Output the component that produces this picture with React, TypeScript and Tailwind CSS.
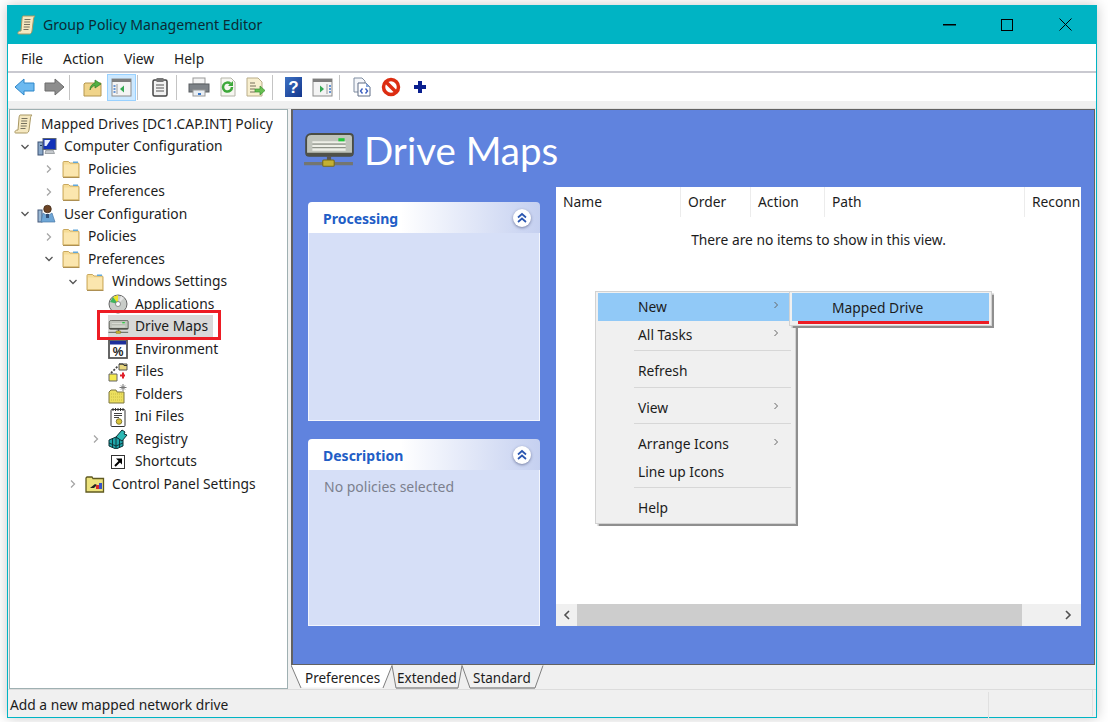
import type { ReactNode } from 'react';

const FONT = "font-['Noto_Sans','Liberation_Sans',sans-serif]";

function Svg({ s = 20, v = 20, children }: { s?: number; v?: number; children: ReactNode }) {
    return (
        <svg width={s} height={s} viewBox={`0 0 ${v} ${v}`} className="block shrink-0">
            {children}
        </svg>
    );
}

function Scroll({ s = 20 }: { s?: number }) {
    return (
        <Svg s={s}>
            <path d="M6 1h12c-1 1-1.500 2-1.500 3L15 16c-.2 1.500-1 3-2.500 3H2c-1 0-1.500-.5-1-1.500.5-1 1-1.500 3-1.500L5 4c.1-1 .4-3 1-3z" fill="#f5e8c0" stroke="#a89763" strokeWidth="1" />
            <path d="M7.500 4.500h6M7.200 7h6M7 9.500h6M6.700 12h6M6.500 14.500h5" stroke="#77725e" strokeWidth="1" />
        </Svg>
    );
}

function Folder() {
    return (
        <Svg s={20}>
            <path d="M2 18V3.500c0-.6.4-1 1-1h4.500L9 4h8c.6 0 1 .4 1 1v13z" fill="#f6dc96" stroke="#c9a85e" strokeWidth="1" />
            <path d="M3 5.500h14v11.500H3z" fill="#fbe6ae" />
            <rect x="12" y="2.500" width="5" height="1.500" fill="#62a8da" />
            <path d="M2 18.500h16.500" stroke="#ad8f52" strokeWidth="1" />
        </Svg>
    );
}

function Computer() {
    return (
        <Svg s={20}>
            <rect x="1" y="5" width="5" height="13" fill="#8aa8c8" stroke="#3c5274" strokeWidth="1" />
            <rect x="3" y="8" width="2" height="1" fill="#20395e" />
            <rect x="6" y="1.500" width="13" height="11" fill="#1131b8" stroke="#5c6672" strokeWidth="1" />
            <path d="M7.500 3h6l-4 6H7.500z" fill="#e8f0ff" />
            <path d="M9 13h7l1.500 3.500H8z" fill="#c4c8cc" stroke="#83888d" strokeWidth=".7" />
        </Svg>
    );
}

function User() {
    return (
        <Svg s={20}>
            <rect x="1" y="6" width="4" height="12" fill="#9ab8d4" stroke="#44597a" strokeWidth="1" />
            <circle cx="10.500" cy="5" r="3.800" fill="#6d4526" stroke="#3a2412" strokeWidth=".7" />
            <path d="M6 9l4.500 3 4.500-3 3 9H4z" fill="#6ea6d6" stroke="#4a78a8" strokeWidth=".7" />
            <path d="M9 10h3v4H9z" fill="#2f4f78" />
        </Svg>
    );
}

function DiscIcon() {
    return (
        <Svg s={20}>
            <circle cx="10" cy="10" r="9" fill="#c8ccc8" stroke="#666" strokeWidth="1" />
            <path d="M10 10L5 3l5-2z" fill="#eee322" />
            <path d="M10 10L2 8l3-5z" fill="#3fb45e" />
            <path d="M10 10l3-8 3 2z" fill="#e6e6e6" />
            <circle cx="10" cy="10" r="2.500" fill="#fff" stroke="#666" strokeWidth=".7" />
        </Svg>
    );
}

function DriveIcon({ s = 21 }: { s?: number }) {
    return (
        <svg width={s} height={s * 0.66} viewBox="0 0 50 33" className="block shrink-0">
            <path d="M3 6c0-3 2-5 5-5h37c2 0 3 1 3 3v15c0 2-1 3-3 3H6c-2 0-3-1-3-3z" fill="#bfc3ba" stroke="#4a4d44" strokeWidth="1.800" />
            <path d="M9 9h32M9 12.500h32M9 16h32" stroke="#eef0e8" strokeWidth="2" />
            <path d="M9 10.500h32M9 14h32" stroke="#8e9288" strokeWidth="1" />
            <rect x="34" y="5" width="6" height="3" fill="#22c83a" />
            <rect x="3" y="19" width="45" height="3" fill="#50524a" />
            <rect x="23" y="22" width="4" height="4" fill="#555" />
            <path d="M1 29.500h47" stroke="#74766f" strokeWidth="3" />
            <rect x="19" y="26" width="11" height="6" rx="1" fill="#c4b032" stroke="#75691c" strokeWidth="1" />
        </svg>
    );
}

function EnvIcon() {
    return (
        <Svg s={20}>
            <rect x="1" y="1" width="18" height="18" fill="#fff" stroke="#555" strokeWidth="1.800" />
            <rect x="2" y="2" width="16" height="3.500" fill="#1c2f9c" />
            <text x="10" y="16.500" textAnchor="middle" fontSize="12" fontWeight="700" fill="#222" fontFamily="Liberation Sans, sans-serif">%</text>
        </Svg>
    );
}

function FilesIcon() {
    return (
        <Svg s={20}>
            <path d="M11 2h8v6h-8z" fill="#e8d67e" stroke="#555" strokeWidth="1" />
            <path d="M11 2h4l1 1.500h3" fill="none" stroke="#333" strokeWidth="1" />
            <path d="M1 12h8v7H1z" fill="#f4e94e" stroke="#666" strokeWidth="1" />
            <path d="M3 11L10 4" stroke="#444" strokeWidth="1.800" strokeDasharray="2 1.500" />
            <path d="M12 13.500h5M15 10.500v6" stroke="#e0202a" strokeWidth="2" />
        </Svg>
    );
}

function FoldersIcon() {
    return (
        <Svg s={20}>
            <path d="M1 19V8l2-2h5l1 2h7v11z" fill="#ecdf5e" stroke="#7c7640" strokeWidth="1" />
            <path d="M3 10h12M3 13h12M3 16h12" stroke="#c9bc44" strokeWidth="1" strokeDasharray="1 1" />
            <path d="M15 0v7M11.500 3.500h7M13 1.500l4 4M17 1.500l-4 4" stroke="#777" strokeWidth="1" />
        </Svg>
    );
}

function IniIcon() {
    return (
        <Svg s={20}>
            <rect x="3" y="2.500" width="14" height="17" rx="1" fill="#fff" stroke="#333" strokeWidth="1" />
            <path d="M5 1v3M7.500 1v3M10 1v3M12.500 1v3M15 1v3" stroke="#333" strokeWidth="1" />
            <path d="M6 6.500h8M6 8.500h8M6 10.500h5" stroke="#444" strokeWidth="1" />
            <circle cx="11" cy="14.500" r="2.800" fill="#d8c33a" stroke="#6d6420" strokeWidth=".8" />
        </Svg>
    );
}

function RegistryIcon() {
    return (
        <Svg s={20}>
            <path d="M1 11l7-3 7 3v6l-7 3-7-3z" fill="#1fa5aa" stroke="#0c2f33" strokeWidth="1" />
            <path d="M1 14l7 3 7-3M8 8v12M4.500 9.500v9M11.500 9.500v9" stroke="#0c2f33" strokeWidth=".9" fill="none" />
            <path d="M8 8l6-7 3 2-1 2 3 1-5 6z" fill="#2cb8b4" stroke="#0c2f33" strokeWidth="1" />
        </Svg>
    );
}

function ShortcutIcon() {
    return (
        <Svg s={20}>
            <rect x="3.500" y="3.500" width="13" height="13" fill="#fff" stroke="#333" strokeWidth="1" />
            <path d="M7 14l5-5" stroke="#000" strokeWidth="2" />
            <path d="M8 6.500h6v6z" fill="#000" />
        </Svg>
    );
}

function PanelFolder() {
    return (
        <Svg s={20}>
            <path d="M1 18V4l1-1h5l1 1.500h10.500V18z" fill="#ece27c" stroke="#5f5a20" strokeWidth="1.300" />
            <path d="M5 14l5-4 2 1-3 3z" fill="#222" />
            <rect x="11" y="11" width="3" height="4" fill="#d8282a" />
            <rect x="14" y="9" width="3" height="6" fill="#3854c8" />
        </Svg>
    );
}

function Chevron({ open }: { open?: boolean }) {
    return (
        <svg width="10" height="10" viewBox="0 0 10 10" className="block">
            {open ? (
                <path d="M1.500 3l3.500 3.500L8.500 3" fill="none" stroke="#555" strokeWidth="1.300" />
            ) : (
                <path d="M3 1.500L6.500 5 3 8.500" fill="none" stroke="#a6a6a6" strokeWidth="1.300" />
            )}
        </svg>
    );
}

function TreeRow({ pad, chevron, icon, label, selected }: { pad: string; chevron?: 'open' | 'closed' | 'none'; icon: ReactNode; label: string; selected?: boolean }) {
    return (
        <div className={`flex h-[22.5px] items-center ${pad}`}>
            {chevron && (
                <span className="flex w-[25px] shrink-0 justify-center">
                    {chevron !== 'none' && <Chevron open={chevron === 'open'} />}
                </span>
            )}
            <span className={`flex h-[23px] items-center ${selected ? 'bg-[#d9d9d9]' : ''}`}>
                <span className="flex w-[20px] justify-center">{icon}</span>
                <span className="ml-[7px] pr-[5px] whitespace-nowrap">{label}</span>
            </span>
        </div>
    );
}

function Tool({ w = 'w-[29px]', ml = '', active, children }: { w?: string; ml?: string; active?: boolean; children: ReactNode }) {
    return (
        <div className={`flex h-[27px] items-center justify-center ${w} ${ml} ${active ? 'border border-[#99d1ff] bg-[#cce8ff]' : ''}`}>
            {children}
        </div>
    );
}

function ToolSep({ ml }: { ml: string }) {
    return <div className={`h-[25px] w-px bg-[#c4c4c4] ${ml}`} />;
}

function PaneIcon({ right }: { right?: boolean }) {
    return (
        <Svg s={21} v={21}>
            <rect x="1" y="2" width="19" height="17" fill="#f4f4f4" stroke="#8c8c8c" strokeWidth="1" />
            <rect x="1" y="2" width="19" height="3" fill="#7d7d7d" />
            <path d={right ? 'M15 7v10' : 'M6 7v10'} stroke="#9c9c9c" strokeWidth="1" />
            <path d={right ? 'M17 9h2M17 12h2M17 15h2' : 'M2.500 9h2M2.500 12h2M2.500 15h2'} stroke="#3b78c9" strokeWidth="1.500" />
            <path d={right ? 'M8 8.500l4 3.500-4 3.500z' : 'M13 8.500L9 12l4 3.500z'} fill="#34a853" />
        </Svg>
    );
}

function Toolbar() {
    return (
        <div className="flex h-[28px] items-center bg-white pl-[2px]">
            <Tool>
                <Svg s={22} v={22}>
                    <path d="M1 11l9-8v4h10v8H10v4z" fill="#6cb9f0" stroke="#2d86c9" strokeWidth="1" />
                </Svg>
            </Tool>
            <Tool>
                <Svg s={22} v={22}>
                    <path d="M21 11l-9-8v4H2v8h10v4z" fill="#8d8d8d" stroke="#6c6c6c" strokeWidth="1" />
                </Svg>
            </Tool>
            <ToolSep ml="ml-[1px]" />
            <Tool ml="ml-[8px]">
                <Svg>
                    <path d="M1 19V7l1-1h16v13z" fill="#f0d48a" stroke="#b4964f" strokeWidth="1" />
                    <path d="M7 13c0-4 2-6 5-7V3l6 4-6 4V8.500c-2 .5-4 2-5 4.500z" fill="#52b043" stroke="#2e7d28" strokeWidth=".7" />
                </Svg>
            </Tool>
            <Tool active>
                <PaneIcon />
            </Tool>
            <ToolSep ml="ml-[1px]" />
            <Tool ml="ml-[7px]">
                <Svg>
                    <rect x="3" y="3" width="14" height="16" rx="1.500" fill="#f2f2f2" stroke="#444" strokeWidth="1.500" />
                    <rect x="6.500" y="1" width="7" height="4" fill="#777" />
                    <path d="M6 8h8M6 11h8M6 14h8" stroke="#555" strokeWidth="1.200" />
                </Svg>
            </Tool>
            <ToolSep ml="ml-[2px]" />
            <Tool ml="ml-[7px]">
                <Svg s={22} v={22}>
                    <rect x="5" y="2" width="12" height="6" fill="#f4f4f4" stroke="#999" strokeWidth="1" />
                    <rect x="1" y="8" width="20" height="8" fill="#7d8287" stroke="#5a5e62" strokeWidth="1" />
                    <rect x="5" y="14" width="12" height="6" fill="#e9eef3" stroke="#999" strokeWidth="1" />
                    <rect x="10" y="17" width="3" height="2" fill="#3a78c9" />
                </Svg>
            </Tool>
            <Tool>
                <Svg>
                    <path d="M3 1h10l4 4v14H3z" fill="#f6f6f0" stroke="#b4b4a8" strokeWidth="1" />
                    <path d="M14 10a4.500 4.500 0 1 1-1.500-3.300" fill="none" stroke="#3da83a" strokeWidth="2.500" />
                    <path d="M15 4v5h-5z" fill="#3da83a" />
                </Svg>
            </Tool>
            <Tool w="w-[28px]">
                <Svg>
                    <path d="M1 1h11l4 4v14H1z" fill="#f8efcf" stroke="#b9ad8a" strokeWidth="1" />
                    <path d="M4 6h5M4 9h6M4 12h5M4 15h5" stroke="#77705a" strokeWidth="1" />
                    <path d="M9 12h5V9l5 4.500-5 4.500v-3H9z" fill="#66c050" stroke="#3b8f30" strokeWidth=".7" />
                </Svg>
            </Tool>
            <ToolSep ml="ml-[2px]" />
            <Tool ml="ml-[6px]">
                <div className="flex h-[20px] w-[17px] items-center justify-center bg-gradient-to-br from-[#3e72c4] to-[#14358c] font-['Liberation_Sans',sans-serif] text-[17px] leading-none font-bold text-white">?</div>
            </Tool>
            <Tool>
                <PaneIcon right />
            </Tool>
            <ToolSep ml="ml-[2px]" />
            <Tool ml="ml-[7px]">
                <Svg>
                    <path d="M2 1h8l3 3v11H2z" fill="#f4f6fa" stroke="#7f8ca0" strokeWidth="1" />
                    <path d="M6 6h8l4 4v9H6z" fill="#fff" stroke="#5f6d85" strokeWidth="1" />
                    <path d="M14 6v4h4z" fill="#87a8dc" />
                    <path d="M10.500 11.500L8.500 14l2 2.500M13.500 11.500l2 2.500-2 2.500" fill="none" stroke="#3a5ec0" strokeWidth="1.400" />
                </Svg>
            </Tool>
            <Tool>
                <Svg>
                    <circle cx="10" cy="10" r="7.500" fill="#fff" stroke="#dc2d12" strokeWidth="3.500" />
                    <path d="M5 5l10 10" stroke="#dc2d12" strokeWidth="3.500" />
                </Svg>
            </Tool>
            <Tool>
                <Svg s={14} v={14}>
                    <path d="M5 1h4v4h4v4H9v4H5V9H1V5h4z" fill="#0a1f8f" />
                </Svg>
            </Tool>
        </div>
    );
}

function Collapse() {
    return (
        <span className="flex h-[18px] w-[18px] items-center justify-center rounded-full bg-white shadow-[0_1px_3px_rgba(60,70,110,0.6)]">
            <svg width="12" height="12" viewBox="0 0 12 12">
                <path d="M2 5.500L6 2l4 3.500M2 10l4-3.500 4 3.500" fill="none" stroke="#2a56b0" strokeWidth="1.700" />
            </svg>
        </span>
    );
}

function Card({ title, height, children }: { title: string; height: string; children?: ReactNode }) {
    return (
        <div className={`flex w-[232px] flex-col ${height}`}>
            <div className="flex h-[31px] shrink-0 items-center justify-between rounded-t-[4px] bg-gradient-to-r from-white from-40% to-[#c5d0f0] pr-[9px] pl-[15px]">
                <span className="mt-[2px] text-[14px] font-bold text-[#215dc6]">{title}</span>
                <Collapse />
            </div>
            <div className="flex-1 border-x border-b border-[#f2f5fd] bg-[#d6dff7] pt-[6px] pl-[15px] text-[14px] text-[#7c7f8e]">{children}</div>
        </div>
    );
}

function ListView() {
    return (
        <div className="ml-[16px] flex h-[439px] w-[525px] flex-col bg-white text-[13.8px] text-[#1c1c1c]">
            <div className="flex h-[30px] shrink-0 items-center overflow-hidden">
                <div className="flex h-full w-[125px] shrink-0 items-center border-r border-[#ececec] pt-px pl-[7px]">Name</div>
                <div className="flex h-full w-[70px] shrink-0 items-center border-r border-[#ececec] pt-px pl-[7px]">Order</div>
                <div className="flex h-full w-[74px] shrink-0 items-center border-r border-[#ececec] pt-px pl-[7px]">Action</div>
                <div className="flex h-full w-[200px] shrink-0 items-center border-r border-[#ececec] pt-px pl-[7px]">Path</div>
                <div className="flex h-full items-center pt-px pl-[7px] whitespace-nowrap">Reconn</div>
            </div>
            <div className="flex-1 pt-[13px] text-center">There are no items to show in this view.</div>
            <div className="flex h-[22px] shrink-0 items-center bg-[#f0f0f0]">
                <span className="flex w-[21px] shrink-0 justify-center">
                    <svg width="8" height="10" viewBox="0 0 8 10"><path d="M6 1L2 5l4 4" fill="none" stroke="#505050" strokeWidth="1.600" /></svg>
                </span>
                <div className="h-full w-[445px] bg-[#cdcdcd]" />
                <span className="ml-auto flex w-[26px] justify-center">
                    <svg width="8" height="10" viewBox="0 0 8 10"><path d="M2 1l4 4-4 4" fill="none" stroke="#505050" strokeWidth="1.600" /></svg>
                </span>
            </div>
        </div>
    );
}

function Tabs() {
    return (
        <div className="relative flex h-[24px] items-center pt-[2px] text-[13.5px] text-[#1c1c1c]">
            <svg width="260" height="24" viewBox="0 0 260 24" className="absolute top-0 left-0">
                <path d="M0 0l10 22.500h82L101 0z" fill="#fff" />
                <path d="M101 .5l4 22h62l4-22zM171 .5l8 22h65l8-22z" fill="#f0f0f0" />
                <path d="M0 0l10 23M92 23l9-22.500M101 .5l4 22.500M171 .5l-4 22.500M171 .5l8 22.500M252 .5l-8 22.500" fill="none" stroke="#7f7f7f" strokeWidth="1" />
                <path d="M105 23h62M179 23h65" stroke="#8f8f8f" strokeWidth="1.500" />
            </svg>
            <span className="relative ml-[14px] w-[92px]">Preferences</span>
            <span className="relative w-[76px]">Extended</span>
            <span className="relative">Standard</span>
        </div>
    );
}

function MenuItem({ label, sub, hi }: { label: string; sub?: boolean; hi?: boolean }) {
    return (
        <div className={`flex h-[27.500px] items-center pl-[40px] ${hi ? 'bg-[#91c9f7]' : ''}`}>
            <span className="mt-[2px]">{label}</span>
            {sub && (
                <svg width="6" height="8" viewBox="0 0 6 8" className="mb-[3px] ml-auto mr-[14px]">
                    <path d="M1.500 1l3 3-3 3" fill="none" stroke="#666" strokeWidth="1" />
                </svg>
            )}
        </div>
    );
}

function MenuSep() {
    return <div className="mt-[2px] mb-[6px] ml-[36px] h-px w-[157px] bg-[#d7d7d7]" />;
}

function ContextMenu() {
    return (
        <>
            <div className="absolute top-[291px] left-[595px] w-[201px] border border-[#d2d2d2] bg-[#f0f0f0] px-[2px] pt-px pb-px text-[13.8px] text-[#1c1c1c] shadow-[1.500px_1.500px_1px_#8f8f8f]">
                <MenuItem label="New" sub hi />
                <MenuItem label="All Tasks" sub />
                <MenuSep />
                <MenuItem label="Refresh" />
                <MenuSep />
                <MenuItem label="View" sub />
                <MenuSep />
                <MenuItem label="Arrange Icons" sub />
                <MenuItem label="Line up Icons" />
                <MenuSep />
                <MenuItem label="Help" />
            </div>
            <div className="absolute top-[291px] left-[789px] h-[35px] w-[203px] border border-[#d2d2d2] bg-[#f0f0f0] px-[2px] pt-px text-[13.8px] text-[#1c1c1c] shadow-[1.500px_1.500px_1px_#8f8f8f]">
                <div className="flex h-[28px] items-center bg-[#91c9f7] pt-[2px] pl-[40px]">Mapped Drive</div>
                <div className="ml-[6px] h-[3px] bg-[#ed1c24]" />
            </div>
        </>
    );
}

export default function App() {
    return (
        <div className={`relative h-[722px] w-[1108px] overflow-hidden bg-white ${FONT}`}>
            <div className="absolute top-[5px] left-[7px] flex h-[713px] w-[1090px] flex-col border-x border-b border-[#00b4c4] bg-[#f0f0f0] shadow-[0_0_12px_rgba(0,0,0,0.22)]">
                <div className="-mx-px flex h-[39px] shrink-0 items-center bg-[#00b4c4] pl-[10px] text-[14.1px] text-[#0b2a33]">
                    <Scroll s={20} />
                    <span className="ml-[6px]">Group Policy Management Editor</span>
                    <svg width="13" height="2" viewBox="0 0 13 2" className="ml-auto"><rect width="13" height="1.500" fill="#000" /></svg>
                    <svg width="12" height="12" viewBox="0 0 12 12" className="ml-[45px]"><rect x=".5" y=".5" width="11" height="11" fill="none" stroke="#000" /></svg>
                    <svg width="13" height="13" viewBox="0 0 13 13" className="mr-[25px] ml-[46px]"><path d="M.5.5l12 12M12.500.5l-12 12" stroke="#000" strokeWidth="1" /></svg>
                </div>
                <div className="flex h-[27px] shrink-0 items-center gap-[20px] bg-white pt-[3px] pl-[13px] text-[13.8px] text-[#1c1c1c]">
                    <span>File</span>
                    <span>Action</span>
                    <span>View</span>
                    <span>Help</span>
                </div>
                <div className="h-[2px] shrink-0 bg-[#c9c9d0]" />
                <Toolbar />
                <div className="h-[8px] shrink-0 border-b border-[#e2e2e2] bg-[#f0f0f0]" />
                <div className="flex min-h-0 flex-1 pl-px">
                    <div className="w-[279px] shrink-0 border border-[#9fb0b2] bg-white pt-[3px] text-[13.8px] text-[#1c1c1c]">
                        <TreeRow pad="pl-[4px]" icon={<Scroll s={20} />} label="Mapped Drives [DC1.CAP.INT] Policy" />
                        <TreeRow pad="pl-[2px]" chevron="open" icon={<Computer />} label="Computer Configuration" />
                        <TreeRow pad="pl-[26px]" chevron="closed" icon={<Folder />} label="Policies" />
                        <TreeRow pad="pl-[26px]" chevron="closed" icon={<Folder />} label="Preferences" />
                        <TreeRow pad="pl-[2px]" chevron="open" icon={<User />} label="User Configuration" />
                        <TreeRow pad="pl-[26px]" chevron="closed" icon={<Folder />} label="Policies" />
                        <TreeRow pad="pl-[26px]" chevron="open" icon={<Folder />} label="Preferences" />
                        <TreeRow pad="pl-[50px]" chevron="open" icon={<Folder />} label="Windows Settings" />
                        <TreeRow pad="pl-[73px]" chevron="none" icon={<DiscIcon />} label="Applications" />
                        <TreeRow pad="pl-[73px]" chevron="none" icon={<DriveIcon />} label="Drive Maps" selected />
                        <TreeRow pad="pl-[73px]" chevron="none" icon={<EnvIcon />} label="Environment" />
                        <TreeRow pad="pl-[73px]" chevron="none" icon={<FilesIcon />} label="Files" />
                        <TreeRow pad="pl-[73px]" chevron="none" icon={<FoldersIcon />} label="Folders" />
                        <TreeRow pad="pl-[73px]" chevron="none" icon={<IniIcon />} label="Ini Files" />
                        <TreeRow pad="pl-[73px]" chevron="closed" icon={<RegistryIcon />} label="Registry" />
                        <TreeRow pad="pl-[73px]" chevron="none" icon={<ShortcutIcon />} label="Shortcuts" />
                        <TreeRow pad="pl-[50px]" chevron="closed" icon={<PanelFolder />} label="Control Panel Settings" />
                    </div>
                    <div className="ml-[3px] flex w-[804px] shrink-0 flex-col">
                        <div className="flex h-[556px] shrink-0 flex-col border-t border-r border-b border-l-2 border-[#626262] bg-[#6083de]">
                            <div className="flex h-[77px] shrink-0 items-center pt-[3px] pl-[10px]">
                                <DriveIcon s={52} />
                                <span className="ml-[9px] font-['Lato','Liberation_Sans',sans-serif] text-[38.5px] leading-none text-white">Drive Maps</span>
                            </div>
                            <div className="flex items-start pl-[15px]">
                                <div className="mt-[15px] flex flex-col gap-[18px]">
                                    <Card title="Processing" height="h-[219px]" />
                                    <Card title="Description" height="h-[187px]">No policies selected</Card>
                                </div>
                                <ListView />
                            </div>
                        </div>
                        <Tabs />
                    </div>
                </div>
                <div className="flex h-[28px] shrink-0 items-center border-t border-[#dcdcdc] pt-[3px] text-[13.8px] text-[#1c1c1c]">
                    <span className="pl-[2px]">Add a new mapped network drive</span>
                    <div className="ml-auto mr-[107px] h-[26px] w-px bg-[#e0e0e0]" />
                    <div className="absolute right-[3px] bottom-[1px] h-[26px] w-px bg-[#e0e0e0]" />
                </div>
            </div>
            <ContextMenu />
            <div className="absolute top-[310px] left-[97px] h-[30px] w-[124px] border-[3px] border-[#ed1c24]" />
        </div>
    );
}
